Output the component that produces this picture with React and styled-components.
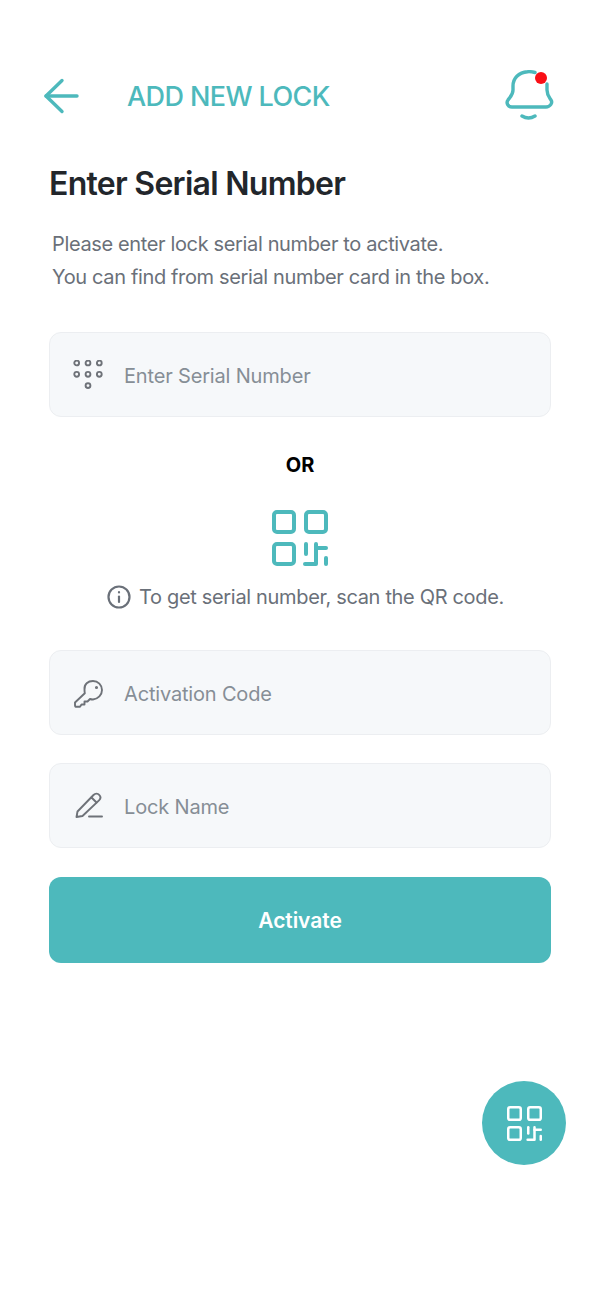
import React from 'react'
import styled, { createGlobalStyle } from 'styled-components'

const teal = '#4db9bc'

const GlobalStyle = createGlobalStyle`
  html, body {
    margin: 0;
    padding: 0;
    background: #ffffff;
  }
  * {
    box-sizing: border-box;
  }
`

const Page = styled.div`
  position: relative;
  width: 600px;
  height: 1300px;
  overflow: hidden;
  padding: 70px 49px 0;
  font-family: Inter, "Noto Sans", sans-serif;
  background: #ffffff;
`

const Header = styled.header`
  display: flex;
  align-items: center;
  height: 52px;
`

const BackIcon = styled.svg`
  width: 36px;
  height: 36px;
  margin-left: -6px;
  flex: none;
`

const HeaderTitle = styled.h1`
  margin: 2px 0 0 48px;
  font-size: 27px;
  line-height: 32px;
  font-weight: 500;
  letter-spacing: -0.6px;
  color: ${teal};
`

const BellIcon = styled.svg`
  width: 50px;
  height: 52px;
  margin-left: auto;
  margin-right: -4px;
  flex: none;
`

const Heading = styled.h2`
  margin: 42px 0 0;
  font-size: 32px;
  line-height: 40px;
  font-weight: 600;
  letter-spacing: -0.72px;
  color: #22262b;
`

const Description = styled.p`
  margin: 24px 0 0 3px;
  font-size: 20px;
  line-height: 33px;
  letter-spacing: -0.36px;
  color: #6a7079;
`

const Field = styled.label`
  display: flex;
  align-items: center;
  gap: 21px;
  height: 85px;
  margin-top: ${props => props.$top}px;
  padding-left: 23px;
  background: #f6f8fa;
  border: 1px solid #eceef1;
  border-radius: 12px;
`

const FieldIcon = styled.svg`
  width: 30px;
  height: 30px;
  flex: none;
`

const FieldInput = styled.input`
  flex: 1;
  min-width: 0;
  border: 0;
  outline: 0;
  padding: 2px 0 0;
  background: transparent;
  font-family: inherit;
  font-size: 20px;
  letter-spacing: -0.17px;
  color: #22262b;

  &::placeholder {
    color: #868e96;
    opacity: 1;
  }
`

const OrLabel = styled.div`
  margin-top: 36px;
  text-align: center;
  font-size: 20px;
  line-height: 24px;
  font-weight: 700;
  color: #000000;
`

const ScanButton = styled.div`
  display: flex;
  justify-content: center;
  margin-top: 33px;
`

const QrIcon = styled.svg`
  display: block;
  width: ${props => props.$size}px;
  height: ${props => props.$size}px;
`

const InfoRow = styled.div`
  display: flex;
  align-items: center;
  justify-content: center;
  gap: 8px;
  height: 24px;
  margin-top: 19px;
  padding-left: 11px;
  font-size: 20px;
  letter-spacing: -0.33px;
  color: #6a7079;
`

const InfoIcon = styled.svg`
  width: 24px;
  height: 24px;
  flex: none;
`

const ActivateButton = styled.button`
  display: block;
  width: 100%;
  height: 86px;
  margin-top: 29px;
  border: 0;
  border-radius: 12px;
  background: ${teal};
  color: #ffffff;
  font-family: inherit;
  font-size: 21px;
  font-weight: 600;
  letter-spacing: -0.05px;
`

const Fab = styled.button`
  position: absolute;
  left: 482px;
  top: 1081px;
  display: flex;
  align-items: center;
  justify-content: center;
  width: 84px;
  height: 84px;
  padding: 0;
  border: 0;
  border-radius: 50%;
  background: ${teal};
`

const QrGlyph = ({ size, color }) => (
  <QrIcon $size={size} viewBox="0 0 56 56" fill="none" stroke={color} strokeWidth="4" strokeLinecap="round" strokeLinejoin="round">
    <rect x="2" y="2" width="20" height="20" rx="3" />
    <rect x="34" y="2" width="20" height="20" rx="3" />
    <rect x="2" y="34" width="20" height="20" rx="3" />
    <path d="M34 34V44" />
    <path d="M44 34V54H33" />
    <path d="M44 38H54" />
    <path d="M54 48V54" />
  </QrIcon>
)

const App = () => {
  return (
    <Page>
      <GlobalStyle />
      <Header>
        <BackIcon viewBox="0 0 36 36" fill="none" stroke={teal} strokeWidth="3.4" strokeLinecap="round" strokeLinejoin="round">
          <path d="M3 18H34" />
          <path d="M19 2.5L3 18L19 33.5" />
        </BackIcon>
        <HeaderTitle>ADD NEW LOCK</HeaderTitle>
        <BellIcon viewBox="0 0 50 52" fill="none">
          <g stroke={teal} strokeWidth="3.4" strokeLinecap="round" strokeLinejoin="round">
            <path d="M30 2.5C27 1.7 24.5 1.5 22.5 1.7C13.5 2.3 8 8.5 8 16V20C8 25 5 27 3 30C0.8 33 3 37 7 37H41C45 37 48 33 46 30C44 27 42 25 42 20V14" />
            <path d="M17 46C21 48.5 26 48.5 30 46" />
          </g>
          <circle cx="36" cy="8" r="6" fill="#fa0f16" />
        </BellIcon>
      </Header>

      <Heading>Enter Serial Number</Heading>
      <Description>
        Please enter lock serial number to activate.
        <br />
        You can find from serial number card in the box.
      </Description>

      <Field $top={38}>
        <FieldIcon viewBox="0 0 30 30" fill="none" stroke="#6e7278" strokeWidth="1.9">
          <circle cx="3.7" cy="3" r="2.4" />
          <circle cx="15" cy="3" r="2.4" />
          <circle cx="26.3" cy="3" r="2.4" />
          <circle cx="3.7" cy="14.3" r="2.4" />
          <circle cx="15" cy="14.3" r="2.4" />
          <circle cx="26.3" cy="14.3" r="2.4" />
          <circle cx="15" cy="25.6" r="2.4" />
        </FieldIcon>
        <FieldInput placeholder="Enter Serial Number" />
      </Field>

      <OrLabel>OR</OrLabel>
      <ScanButton>
        <QrGlyph size={56} color={teal} />
      </ScanButton>
      <InfoRow>
        <InfoIcon viewBox="0 0 24 24" fill="none" stroke="#6a7079" strokeWidth="2.2" strokeLinecap="round">
          <circle cx="12" cy="12" r="10.5" />
          <path d="M12 11.5V17" />
          <path d="M12 7.2V7.4" />
        </InfoIcon>
        To get serial number, scan the QR code.
      </InfoRow>

      <Field $top={41}>
        <FieldIcon viewBox="0 0 30 30" fill="none" stroke="#6e7278" strokeWidth="1.9" strokeLinecap="round" strokeLinejoin="round">
          <path d="M11.5 11.5C11 6 15 3 20 3C25 3 29 7 29 12C29 17 25 21 20 21.5C19 21.5 18 21.4 17 21L14.5 23.5H11.5V26.5H8.5L7 28.8H3.5C2.5 28.8 2 28 2 27.2V24.5L11.8 15.3C11.6 14 11.5 12.7 11.5 11.5Z" />
          <circle cx="23.5" cy="9.5" r="0.6" fill="#6e7278" />
        </FieldIcon>
        <FieldInput placeholder="Activation Code" />
      </Field>

      <Field $top={28}>
        <FieldIcon viewBox="0 0 30 30" fill="none" stroke="#6e7278" strokeWidth="1.9" strokeLinecap="round" strokeLinejoin="round">
          <path d="M3.5 26L4.5 20.5L20.5 4C22.3 2.2 24.8 2.2 26.2 3.8C27.8 5.4 27.8 7.6 26 9.4L9.5 25L3.5 26Z" />
          <path d="M18.5 6.5L23.5 11.5" />
          <path d="M16 25.5H29" />
        </FieldIcon>
        <FieldInput placeholder="Lock Name" />
      </Field>

      <ActivateButton>Activate</ActivateButton>

      <Fab>
        <QrGlyph size={35} color="#ffffff" />
      </Fab>
    </Page>
  )
}

export default App
